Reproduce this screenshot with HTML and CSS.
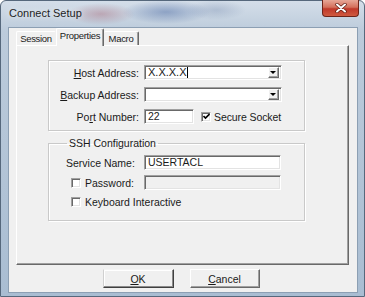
FILE: index.html
```html
<!DOCTYPE html>
<html lang="en">
<head>
  <meta charset="UTF-8">
  <title>Connect Setup</title>
  <link rel="stylesheet" href="styles.css">
</head>
<body>
  <div class="window">
    <div class="titlebar">
      <span class="title">Connect Setup</span>
      <span class="close">
        <svg width="14" height="10" viewBox="0 0 14 10">
          <path d="M3 1.5 L11 8.5 M11 1.5 L3 8.5" stroke="#5a1a10" stroke-width="3.4" stroke-linecap="round"/>
          <path d="M3 1.5 L11 8.5 M11 1.5 L3 8.5" stroke="#fff" stroke-width="2" stroke-linecap="round"/>
        </svg>
      </span>
    </div>

    <div class="client">
      <div class="tabs">
        <span class="tab">Session</span>
        <span class="tab active">Properties</span>
        <span class="tab last">Macro</span>
      </div>

      <div class="panel">
        <fieldset class="group host-group">
          <div class="host-grid">
            <span class="lbl"><u>H</u>ost Address:</span>
            <div class="combo">
              <span class="value">X.X.X.X<span class="caret"></span></span>
              <span class="drop"><span class="arrow"></span></span>
            </div>

            <span class="lbl"><u>B</u>ackup Address:</span>
            <div class="combo">
              <span class="value"></span>
              <span class="drop"><span class="arrow"></span></span>
            </div>

            <span class="lbl">Po<u>r</u>t Number:</span>
            <div class="port-row">
              <span class="edit port">22</span>
              <span class="check checked">
                <svg width="7" height="7" viewBox="0 0 7 7">
                  <path d="M0.5 3 L2.5 5 L6.5 1" stroke="#000" stroke-width="1.7" fill="none"/>
                </svg>
              </span>
              <span class="check-text">Secure Socket</span>
            </div>
          </div>
        </fieldset>

        <fieldset class="group ssh-group">
          <legend>SSH Configuration</legend>
          <div class="ssh-grid">
            <span class="lbl-left">Service Name:</span>
            <span class="edit">USERTACL</span>

            <span class="check-line"><span class="check"></span>Password:</span>
            <span class="edit disabled"></span>

            <span class="check-line wide"><span class="check"></span>Keyboard Interactive</span>
          </div>
        </fieldset>
      </div>

      <div class="actions">
        <button class="btn default"><u>O</u>K</button>
        <button class="btn"><u>C</u>ancel</button>
      </div>
    </div>
  </div>
</body>
</html>
```

FILE: styles.css
```css
body {
  margin: 0;
  width: 365px;
  height: 297px;
  overflow: hidden;
  font-family: "Liberation Sans", Arial, sans-serif;
  font-size: 10.5px;
  color: #1a1a1a;
  background: #fff;
}

.window {
  box-sizing: border-box;
  width: 365px;
  height: 297px;
  padding: 0 7px 4px 8px;
  border: 1px solid #56687c;
  border-radius: 6px 6px 0 0;
  background:
    radial-gradient(ellipse 34px 11px at 100px 13px, rgba(170, 110, 125, 0.45), transparent),
    radial-gradient(ellipse 44px 12px at 165px 11px, rgba(80, 110, 165, 0.5), transparent),
    radial-gradient(ellipse 30px 10px at 215px 9px, rgba(120, 140, 175, 0.35), transparent),
    linear-gradient(#d4dee9, #bccbdb 30px, #a9bdd2);
  display: flex;
  flex-direction: column;
}

.titlebar {
  height: 27px;
  display: flex;
  align-items: flex-start;
  margin-right: -2px;
}

.title {
  margin-top: 6px;
  color: #1e1e1e;
  font-size: 11px;
  text-shadow: 0 0 6px rgba(255, 255, 255, 0.9);
}

.close {
  margin-left: auto;
  width: 37px;
  height: 17px;
  margin-top: -1px;
  box-sizing: border-box;
  border: 1px solid #6e2419;
  border-top: none;
  border-radius: 0 0 4px 4px;
  background: linear-gradient(#e7a797, #d4705c 45%, #c0392a 55%, #cf5a40);
  display: flex;
  align-items: center;
  justify-content: center;
}

.client {
  flex: 1;
  background: #f0f0f0;
  box-shadow: 0 0 0 1px #8c9fb3;
  display: flex;
  flex-direction: column;
}

/* tabs */
.tabs {
  height: 17px;
  display: flex;
  align-items: flex-end;
  padding-left: 7px;
}

.tab {
  box-sizing: border-box;
  height: 14px;
  padding: 0;
  font-size: 9.5px;
  letter-spacing: -0.3px;
  text-align: center;
  white-space: nowrap;
  line-height: 13px;
  border: 1px solid #fff;
  border-bottom: none;
  border-right-color: transparent;
  border-radius: 2px 2px 0 0;
}

.tab:first-child {
  width: 40px;
}

.tab.active {
  position: relative;
  z-index: 1;
  width: 48px;
  height: 18px;
  margin-bottom: -1px;
  line-height: 14px;
  background: #f0f0f0;
  border-right-color: #696969;
  box-shadow: inset -1px 0 0 #a0a0a0;
}

.tab.last {
  width: 35px;
  border-left: none;
  border-right-color: #696969;
  box-shadow: inset -1px 0 0 #a0a0a0;
}

.panel {
  box-sizing: border-box;
  height: 220px;
  margin: 0 8px 0 7px;
  padding: 14px 0 0 31px;
  border: 1px solid;
  border-color: #fff #696969 #696969 #fff;
  box-shadow: inset -1px -1px 0 #a0a0a0;
}

/* group boxes */
.group {
  box-sizing: border-box;
  width: 257px;
  margin: 0;
  min-width: 0;
  border: 1px solid #c9c9c9;
  box-shadow: inset 1px 1px 0 #fff, 1px 1px 0 #fff;
}

.host-group {
  height: 71px;
  padding: 4px 0 0 0;
}

.host-grid {
  display: grid;
  grid-template-columns: 90px 138px;
  column-gap: 5px;
  row-gap: 7px;
  align-items: center;
}

.lbl {
  text-align: right;
  white-space: nowrap;
}

.ssh-group {
  height: 84px;
  margin-top: 6px;
  padding: 6px 0 0 17px;
}

.ssh-group legend {
  margin-left: 1px;
  padding: 0 2px;
  line-height: 12px;
}

.ssh-grid {
  display: grid;
  grid-template-columns: 78px 137px;
  row-gap: 5px;
  align-items: center;
}

.lbl-left {
  line-height: 14px;
}

.check-line {
  display: flex;
  align-items: center;
  gap: 4px;
  padding-left: 5px;
  white-space: nowrap;
}

.check-line.wide {
  grid-column: 1 / span 2;
  margin-top: 1px;
}

/* inputs */
.combo,
.edit {
  box-sizing: border-box;
  height: 15px;
  background: #fff;
  border: 1px solid;
  border-color: #a0a0a0 #fff #fff #a0a0a0;
  box-shadow: inset 1px 1px 0 #696969, inset -1px -1px 0 #e3e3e3;
  display: flex;
  align-items: center;
  padding-left: 3px;
  line-height: 13px;
  white-space: nowrap;
}

.combo {
  padding-right: 2px;
}

.combo .value {
  flex: 1;
  display: flex;
  align-items: center;
  font-size: 11px;
}

.caret {
  width: 1px;
  height: 11px;
  background: #000;
}

.drop {
  box-sizing: border-box;
  width: 11px;
  height: 11px;
  background: #f0f0f0;
  border: 1px solid;
  border-color: #fff #696969 #696969 #fff;
  box-shadow: inset -1px -1px 0 #a0a0a0;
  display: flex;
  align-items: center;
  justify-content: center;
}

.arrow {
  width: 0;
  height: 0;
  border-left: 3px solid transparent;
  border-right: 3px solid transparent;
  border-top: 3px solid #000;
  margin-left: -1px;
}

.edit.disabled {
  background: #f0f0f0;
}

.port-row {
  display: flex;
  align-items: center;
  white-space: nowrap;
}

.edit.port {
  flex: none;
  width: 50px;
}

.check {
  flex: none;
  box-sizing: border-box;
  width: 10px;
  height: 10px;
  background: #fff;
  border: 1px solid;
  border-color: #a0a0a0 #fff #fff #a0a0a0;
  box-shadow: inset 1px 1px 0 #696969, inset -1px -1px 0 #e3e3e3;
  display: flex;
  align-items: center;
  justify-content: center;
}

.port-row .check {
  margin-left: 7px;
}

.check-text {
  margin-left: 3px;
  letter-spacing: -0.1px;
}

/* buttons */
.actions {
  display: flex;
  justify-content: center;
  gap: 16px;
  margin-top: 4px;
  padding-right: 4px;
}

.btn {
  box-sizing: border-box;
  width: 70px;
  height: 19px;
  padding: 0;
  font: inherit;
  color: #1a1a1a;
  background: #f0f0f0;
  border: 1px solid;
  border-color: #fff #696969 #696969 #fff;
  box-shadow: inset -1px -1px 0 #a0a0a0;
}

.btn.default {
  width: 71px;
  border-color: #f4f4f4 #404040 #404040 #d0d0d0;
  box-shadow: inset -1px -1px 0 #8a8a8a, inset 1px 1px 0 #fff;
}
```
